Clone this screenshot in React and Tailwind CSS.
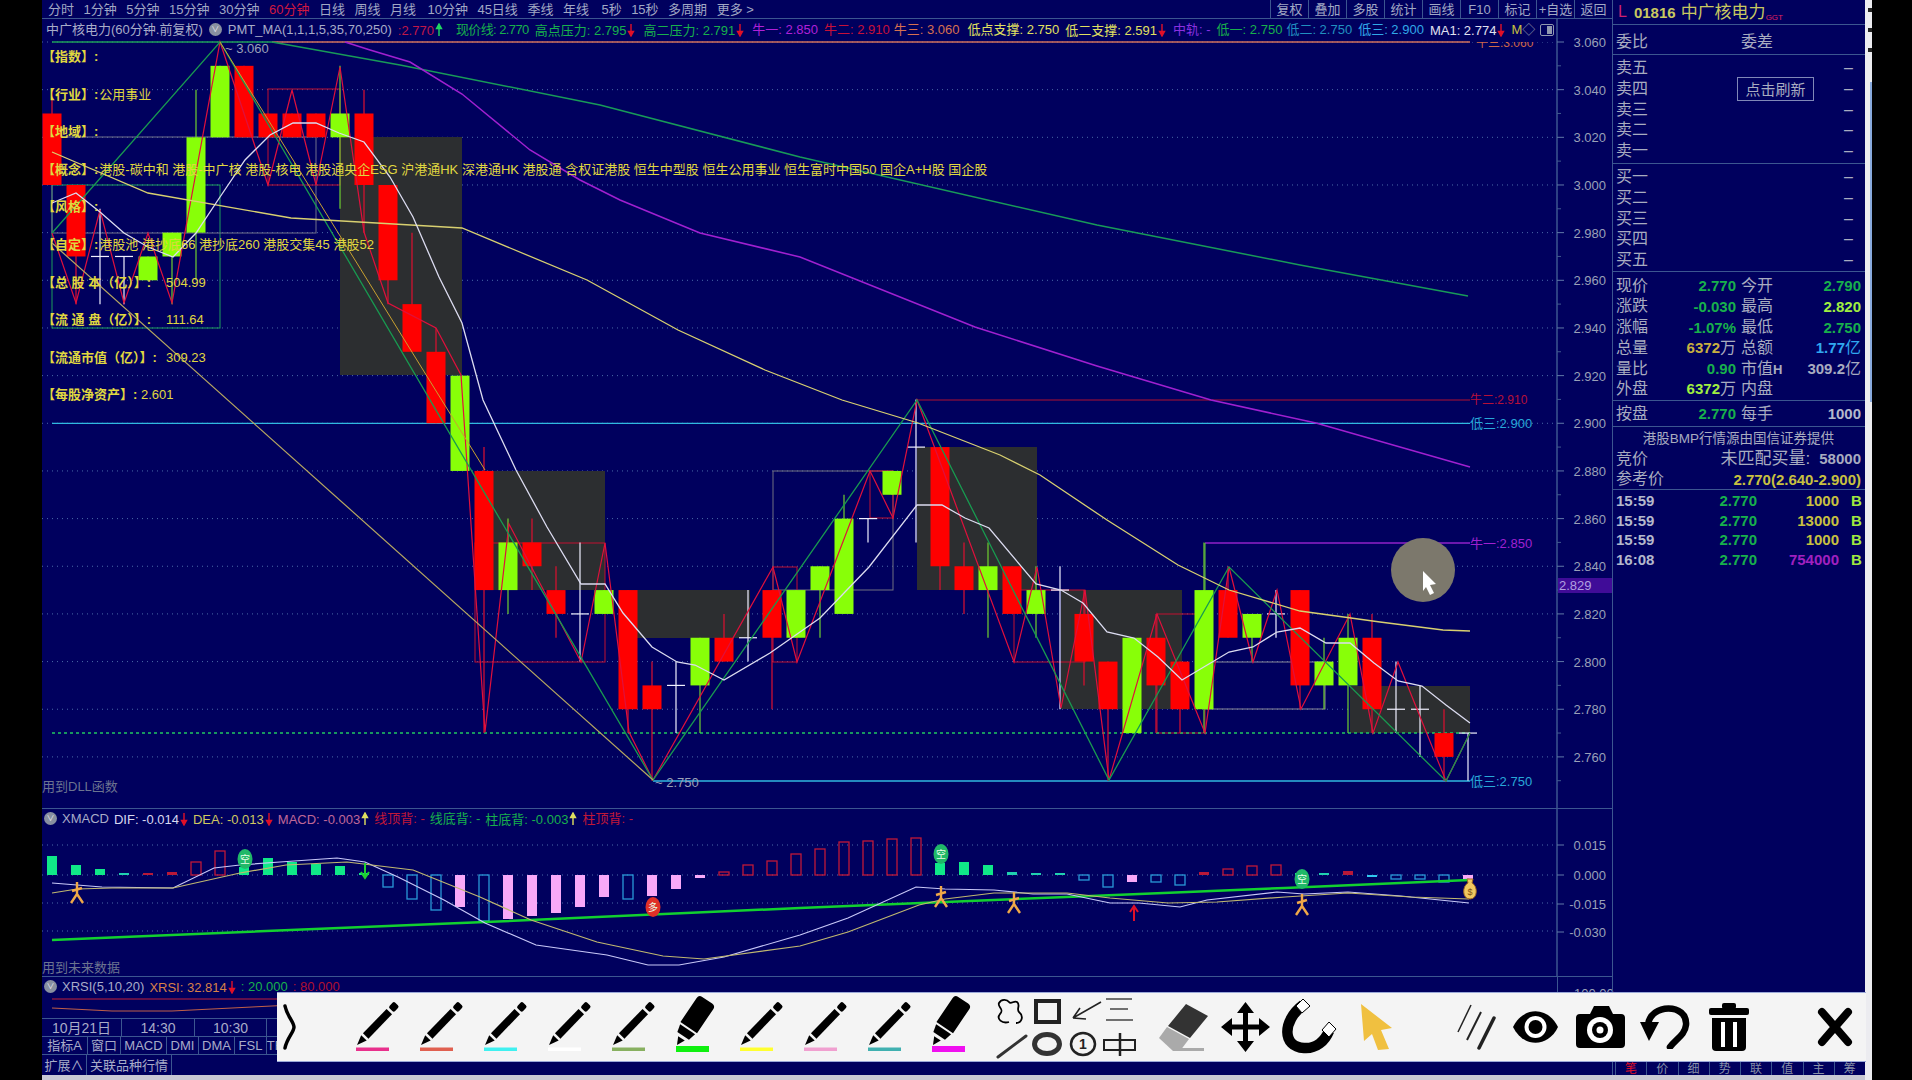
import { Fragment } from "react";

const py = (p) => 42 + (3.06 - p) * 2383;
const cx = (i) => 52 + 24 * i;

// type, top, bottom, high, low
const candles = [
  ["r", 3.03, 3.0, 3.04, 3.0], ["r", 3.0, 2.97, 3.0, 2.95], ["d", 2.97, 2.97, 2.99, 2.95], ["d", 2.97, 2.97, 2.97, 2.95],
  ["g", 2.97, 2.96, 2.97, 2.96], ["g", 2.98, 2.97, 2.98, 2.95], ["g", 3.02, 2.98, 3.04, 2.96], ["g", 3.05, 3.02, 3.05, 3.02],
  ["r", 3.05, 3.02, 3.05, 3.02], ["r", 3.03, 3.02, 3.03, 3.02], ["r", 3.03, 3.02, 3.03, 3.02], ["r", 3.03, 3.02, 3.03, 3.02],
  ["g", 3.03, 3.02, 3.05, 2.99], ["r", 3.03, 3.0, 3.04, 2.98], ["r", 3.0, 2.96, 3.0, 2.95], ["r", 2.95, 2.93, 2.98, 2.93],
  ["r", 2.93, 2.9, 2.94, 2.9], ["g", 2.92, 2.88, 2.92, 2.88], ["r", 2.88, 2.83, 2.89, 2.77], ["g", 2.85, 2.83, 2.86, 2.82],
  ["r", 2.85, 2.84, 2.86, 2.83], ["r", 2.83, 2.82, 2.84, 2.81], ["d", 2.82, 2.82, 2.85, 2.8], ["g", 2.83, 2.82, 2.83, 2.82],
  ["r", 2.83, 2.78, 2.83, 2.77], ["r", 2.79, 2.78, 2.8, 2.75], ["d", 2.79, 2.79, 2.8, 2.77], ["g", 2.81, 2.79, 2.81, 2.77],
  ["r", 2.81, 2.8, 2.82, 2.8], ["d", 2.81, 2.81, 2.83, 2.8], ["r", 2.83, 2.81, 2.83, 2.78], ["g", 2.83, 2.81, 2.83, 2.81],
  ["g", 2.84, 2.83, 2.84, 2.81], ["g", 2.86, 2.82, 2.87, 2.82], ["d", 2.86, 2.86, 2.86, 2.85], ["g", 2.88, 2.87, 2.88, 2.87],
  ["d", 2.89, 2.89, 2.91, 2.85], ["r", 2.89, 2.84, 2.89, 2.83], ["r", 2.84, 2.83, 2.85, 2.82], ["g", 2.84, 2.83, 2.85, 2.81],
  ["r", 2.84, 2.82, 2.84, 2.82], ["g", 2.83, 2.82, 2.84, 2.81], ["d", 2.83, 2.83, 2.84, 2.78], ["r", 2.82, 2.8, 2.83, 2.79],
  ["r", 2.8, 2.78, 2.8, 2.75], ["g", 2.81, 2.77, 2.81, 2.77], ["r", 2.81, 2.79, 2.82, 2.77], ["r", 2.8, 2.78, 2.8, 2.77],
  ["g", 2.83, 2.78, 2.85, 2.77], ["r", 2.83, 2.81, 2.84, 2.81], ["g", 2.82, 2.81, 2.82, 2.8], ["d", 2.82, 2.82, 2.83, 2.81],
  ["r", 2.83, 2.79, 2.83, 2.78], ["g", 2.8, 2.79, 2.81, 2.78], ["g", 2.81, 2.79, 2.82, 2.77], ["r", 2.81, 2.78, 2.82, 2.77],
  ["d", 2.78, 2.78, 2.8, 2.77], ["d", 2.78, 2.78, 2.79, 2.76], ["r", 2.77, 2.76, 2.78, 2.75], ["d", 2.77, 2.77, 2.77, 2.75],
];

const pts = (arr) => arr.map((p) => p.join(",")).join(" ");

const redZig = [[52, 233], [76, 303], [100, 210], [124, 303], [148, 233], [172, 303], [220, 42], [268, 185], [292, 90], [316, 185], [340, 67], [364, 232], [388, 303], [436, 328], [461, 375], [485, 732], [509, 524], [581, 662], [605, 543], [629, 732], [653, 780], [773, 567], [797, 662], [870, 471], [893, 518], [917, 400], [1014, 662], [1037, 567], [1061, 708], [1085, 590], [1109, 780], [1157, 614], [1205, 733], [1229, 567], [1253, 662], [1277, 590], [1301, 709], [1350, 614], [1373, 733], [1398, 662], [1446, 781], [1470, 733]];
const greenZig = [[52, 233], [220, 42], [653, 780], [917, 400], [1109, 780], [1229, 567], [1446, 781], [1470, 733]];
const whiteMa = [[52, 203], [76, 193], [100, 212], [124, 233], [148, 247], [173, 257], [196, 233], [220, 197], [245, 160], [270, 135], [293, 123], [316, 123], [339, 133], [364, 142], [390, 177], [413, 217], [439, 277], [462, 323], [483, 400], [516, 470], [547, 527], [581, 584], [605, 584], [623, 613], [652, 647], [677, 662], [695, 665], [724, 680], [770, 653], [820, 618], [869, 567], [917, 505], [942, 505], [965, 518], [989, 528], [1036, 584], [1061, 590], [1083, 603], [1107, 632], [1134, 638], [1158, 657], [1182, 680], [1229, 652], [1253, 647], [1277, 632], [1300, 628], [1326, 643], [1350, 643], [1374, 663], [1398, 681], [1422, 686], [1446, 705], [1470, 723]];
const yellowMa = [[52, 152], [148, 193], [291, 218], [462, 228], [587, 280], [678, 330], [765, 370], [842, 400], [918, 423], [1000, 455], [1040, 475], [1107, 520], [1178, 565], [1229, 590], [1300, 611], [1380, 622], [1443, 630], [1470, 631]];
const greenMa = [[272, 42], [400, 65], [600, 105], [800, 157], [1097, 225], [1300, 265], [1468, 296]];
const purpleMa = [[345, 42], [370, 50], [410, 62], [462, 94], [530, 150], [580, 180], [620, 200], [700, 233], [800, 257], [975, 327], [1097, 366], [1211, 400], [1316, 423], [1470, 467]];

const boxes = [
  [52, 185, 168, 143, "#1c9e5a"], [52, 137, 264, 96, "#70708a"], [268, 89, 72, 96, "#c01030"], [52, 233, 120, 0, "#c01030"],
  [475, 543, 130, 119, "#c01030"], [485, 602, 120, 0, "#c01030"], [773, 471, 120, 119, "#707080"], [773, 567, 24, 95, "#c01030"],
  [870, 471, 23, 47, "#c01030"], [1014, 590, 71, 72, "#c01030"], [1014, 627, 71, 0, "#c01030"], [1157, 614, 48, 119, "#c01030"],
  [1205, 662, 120, 47, "#8a8a98"], [1253, 662, 147, 0, "#c01030"], [1061, 590, 24, 0, "#c01030"],
];
const darkRects = [[340, 137, 122, 238], [485, 471, 120, 119], [620, 590, 130, 48], [917, 447, 120, 143], [1061, 590, 121, 119], [1350, 686, 120, 47]];

const macdBars = [
  ["s", 856], ["s", 865], ["s", 869], ["t", 873], ["m", 873], ["m", 872], ["o", 862], ["o", 851], ["s", 867], ["s", 858], ["s", 862], ["s", 864], ["s", 866], ["s", 873],
  ["b", 887], ["b", 899], ["b", 910], ["p", 907], ["b", 921], ["p", 919], ["p", 916], ["p", 913], ["p", 907], ["p", 897], ["b", 899], ["p", 896], ["p", 889], ["p", 878],
  ["o", 872], ["o", 865], ["o", 861], ["o", 854], ["o", 849], ["o", 842], ["o", 841], ["o", 839], ["o", 838], ["s", 863], ["s", 862], ["s", 865], ["t", 872], ["t", 873], ["t", 873],
  ["b", 880], ["b", 887], ["p", 882], ["b", 882], ["b", 885], ["m", 872], ["o", 869], ["o", 866], ["o", 865], ["s", 873], ["t", 873], ["m", 871], ["c", 875], ["b", 879], ["b", 879], ["b", 882], ["p", 880],
];

const dif = [[52, 883], [102, 887], [173, 888], [214, 868], [240, 865], [280, 862], [337, 858], [365, 862], [398, 877], [444, 900], [485, 923], [536, 945], [607, 955], [648, 965], [679, 965], [724, 957], [800, 935], [848, 918], [916, 887], [945, 889], [994, 890], [1033, 894], [1067, 894], [1110, 903], [1139, 903], [1180, 907], [1207, 900], [1277, 892], [1304, 894], [1348, 892], [1401, 896], [1469, 903]];
const dea = [[52, 893], [77, 889], [112, 888], [173, 888], [240, 873], [286, 865], [347, 862], [413, 870], [480, 897], [531, 920], [597, 942], [663, 956], [704, 959], [800, 946], [848, 932], [919, 905], [945, 899], [994, 893], [1067, 893], [1110, 898], [1168, 903], [1217, 902], [1285, 897], [1348, 893], [1411, 897], [1469, 899]];
const thick = [[52, 940], [485, 922], [800, 908], [921, 903], [1091, 896], [1285, 888], [1469, 880]];

const axisPrices = [3.06, 3.04, 3.02, 3.0, 2.98, 2.96, 2.94, 2.92, 2.9, 2.88, 2.86, 2.84, 2.82, 2.8, 2.78, 2.76];

function Arrow({ down, color }) {
  return (
    <svg width="8" height="14" viewBox="0 0 8 14" className="ml-px inline-block align-[-2px]">
      {down ? (
        <path d="M4 1 V10 M1.5 8.5 L4 13 L6.5 8.5 Z" stroke={color} strokeWidth="1.4" fill={color} />
      ) : (
        <path d="M4 13 V4 M1.5 5.5 L4 1 L6.5 5.5 Z" stroke={color} strokeWidth="1.4" fill={color} />
      )}
    </svg>
  );
}

function Runner({ x, y }) {
  return (
    <g transform={`translate(${x},${y})`} stroke="#f0a848" strokeWidth="2.4" fill="none">
      <path d="M0 -11 L0 1 M0 1 L-6 10 M0 1 L6 10 M-5 -2 L5 -5" />
    </g>
  );
}

function Badge({ x, y, fill, text }) {
  return (
    <g>
      <ellipse cx={x} cy={y} rx="7.5" ry="10" fill={fill} />
      <text x={x} y={y + 4} textAnchor="middle" fontSize="10" fill="#e8ffe8">{text}</text>
    </g>
  );
}

function MainChart() {
  return (
    <svg width="1570" height="790" viewBox="42 19 1570 790" className="block">
      {axisPrices.map((p) => (
        <line key={p} x1="42" x2="1557" y1={py(p)} y2={py(p)} stroke="#4a6aa8" strokeWidth="1" strokeDasharray="1 4" />
      ))}
      {darkRects.map((r, i) => <rect key={i} x={r[0]} y={r[1]} width={r[2]} height={r[3]} fill="#2c2e30" />)}
      {boxes.map((b, i) => <rect key={i} x={b[0]} y={b[1]} width={b[2]} height={b[3]} fill="none" stroke={b[4]} strokeWidth="1" />)}
      <text x="1476" y="47" fontSize="12" fill="#d06848">牛三:3.060</text>
      <rect x="1470" y="19" width="86" height="23" fill="#00005e" />
      <line x1="52" x2="272" y1="42" y2="42" stroke="#1c9e5a" strokeWidth="1.5" />
      <line x1="272" x2="1470" y1="42" y2="42" stroke="#d0705c" strokeWidth="1.5" />
      <line x1="917" x2="1470" y1="400" y2="400" stroke="#b01030" strokeWidth="1" />
      <line x1="52" x2="1470" y1={py(2.9)} y2={py(2.9)} stroke="#30b8e0" strokeWidth="1.3" />
      <line x1="653" x2="1470" y1="781" y2="781" stroke="#30b8e0" strokeWidth="1.3" />
      <line x1="1205" x2="1470" y1="543" y2="543" stroke="#9020c8" strokeWidth="1.5" />
      <line x1="1205" x2="1205" y1="543" y2="590" stroke="#60d040" strokeWidth="1" />
      <line x1="52" x2="1470" y1="733" y2="733" stroke="#20c860" strokeWidth="1.5" strokeDasharray="3 3" />
      {candles.map((c, i) => {
        const x = cx(i);
        const color = c[0] === "r" ? "#ff0000" : c[0] === "g" ? "#88ff08" : "#f0f0ff";
        const wick = c[0] === "r" ? "#e01030" : c[0] === "g" ? "#70d030" : "#f0f0ff";
        return (
          <Fragment key={i}>
            <line x1={x} x2={x} y1={py(c[3])} y2={py(c[4])} stroke={wick} strokeWidth="1.2" />
            {c[0] === "d" ? (
              <line x1={x - 9} x2={x + 9} y1={py(c[1])} y2={py(c[1])} stroke={color} strokeWidth="1.2" />
            ) : (
              <rect x={x - 9.5} y={py(c[1])} width="19" height={py(c[2]) - py(c[1])} fill={color} />
            )}
          </Fragment>
        );
      })}
      <polyline points={pts(redZig)} fill="none" stroke="#e0103c" strokeWidth="1.2" />
      <polyline points={pts(greenZig)} fill="none" stroke="#189a50" strokeWidth="1.3" />
      <line x1="52" y1="243" x2="653" y2="780" stroke="#b8a860" strokeWidth="1.2" />
      <line x1="220" y1="42" x2="485" y2="470" stroke="#c8a030" strokeWidth="1" />
      <polyline points={pts(greenMa)} fill="none" stroke="#189a58" strokeWidth="1.5" />
      <polyline points={pts(purpleMa)} fill="none" stroke="#a020d0" strokeWidth="1.5" />
      <polyline points={pts(yellowMa)} fill="none" stroke="#d8d070" strokeWidth="1.3" />
      <polyline points={pts(whiteMa)} fill="none" stroke="#dcdcf0" strokeWidth="1.3" />

      <ellipse cx="1423" cy="570" rx="32" ry="32" fill="#7c786c" />
      <polygon points="1423,571 1436,584 1430,585 1434,593 1430,595 1426,587 1423,591" fill="#fff" />

      <line x1="1557" x2="1557" y1="19" y2="809" stroke="#3c5690" strokeWidth="1.5" />
      {axisPrices.map((p) => (
        <Fragment key={p}>
          <line x1="1557" x2="1564" y1={py(p)} y2={py(p)} stroke="#6078a8" />
          <line x1="1557" x2="1561" y1={py(p) + 23.8} y2={py(p) + 23.8} stroke="#40598f" />
          <text x="1606" y={py(p) + 5} textAnchor="end" fontSize="13" fill="#9aa0b8">{p.toFixed(3)}</text>
        </Fragment>
      ))}
      <rect x="1558" y="578" width="54" height="15" fill="#400c98" />
      <text x="1559" y="590" fontSize="13" fill="#b0a0e0">2.829</text>

      <text x="1470" y="404" fontSize="12" fill="#b81038">牛二:2.910</text>
      <text x="1470" y="428" fontSize="13" fill="#28a8d8">低三:2.900</text>
      <text x="1470" y="548" fontSize="13" fill="#a020d0">牛一:2.850</text>
      <text x="1470" y="786" fontSize="13" fill="#28a8d8">低三:2.750</text>
      <text x="225" y="53" fontSize="13" fill="#9aa0b8">~ 3.060</text>
      <text x="655" y="787" fontSize="13" fill="#9aa0b8">~ 2.750</text>
    </svg>
  );
}

function MacdChart() {
  return (
    <svg width="1570" height="168" viewBox="42 809 1570 168" className="block">
      {[845, 875, 903, 931].map((y) => (
        <line key={y} x1="42" x2="1557" y1={y} y2={y} stroke="#4a6aa8" strokeDasharray="1 4" />
      ))}
      {macdBars.map((b, i) => {
        const x = cx(i) - 5;
        const top = Math.min(b[1], 875);
        const h = Math.max(Math.abs(b[1] - 875), 2);
        const fill = { s: "#10e888", t: "#20d0b0", m: "#b81838", p: "#f8a8f8", c: "#30c8f0" }[b[0]] || "none";
        const stroke = { o: "#c01838", b: "#2898d8" }[b[0]] || "none";
        return <rect key={i} x={x} y={top} width="10" height={h} fill={fill} stroke={stroke} strokeWidth="1.3" />;
      })}
      <polyline points={pts(thick)} fill="none" stroke="#12d030" strokeWidth="2.5" />
      <polyline points={pts(dif)} fill="none" stroke="#c8c8f8" strokeWidth="1.2" />
      <polyline points={pts(dea)} fill="none" stroke="#c0b870" strokeWidth="1.2" />
      <Runner x={77} y={893} />
      <Runner x={941} y={897} />
      <Runner x={1014} y={903} />
      <Runner x={1302} y={905} />
      <Badge x={245} y={859} fill="#20b868" text="空" />
      <Badge x={941} y={854} fill="#20b868" text="空" />
      <Badge x={1302} y={879} fill="#20b868" text="空" />
      <Badge x={653} y={907} fill="#e03028" text="多" />
      <path d="M365 863 V876 M361 872 L365 878 L369 872" stroke="#20d030" strokeWidth="2" fill="none" />
      <path d="M1134 921 V908 M1130 912 L1134 906 L1138 912" stroke="#e01028" strokeWidth="2" fill="none" />
      <g>
        <path d="M1467 879 h6 l-1 4 c6 3 6 16 -2 16 c-8 0 -8 -13 -2 -16 z" fill="#f0c860" stroke="#a06820" />
        <text x="1470" y="895" textAnchor="middle" fontSize="9" fill="#805010">$</text>
      </g>
      <line x1="1557" x2="1557" y1="809" y2="977" stroke="#3c5690" strokeWidth="1.5" />
      {[[845, "0.015"], [875, "0.000"], [904, "-0.015"], [932, "-0.030"]].map((t) => (
        <Fragment key={t[1]}>
          <line x1="1557" x2="1564" y1={t[0]} y2={t[0]} stroke="#6078a8" />
          <text x="1606" y={t[0] + 5} textAnchor="end" fontSize="13" fill="#9aa0b8">{t[1]}</text>
        </Fragment>
      ))}
    </svg>
  );
}

function Collapse() {
  return (
    <span className="flex h-[13px] w-[13px] shrink-0 items-center justify-center rounded-full bg-[#8890a0] text-[8px] leading-none text-[#e8e8f0]">∨</span>
  );
}

function Pen({ color, marker }) {
  return (
    <svg width="64" height="50" viewBox="0 0 64 50" className="block shrink-0 overflow-visible">
      {marker ? (
        <g transform="translate(1,43) rotate(-56)" fill="#000">
          <polygon points="0,0 8,-4 8,4" />
          <polygon points="11,-7 19,-9 19,9 11,7" />
          <path d="M21 -10 H50 Q54 -10 54 -6 V6 Q54 10 50 10 H21 Z" />
        </g>
      ) : (
        <g transform="translate(1,43) rotate(-46)" fill="#000">
          <polygon points="0,0 10,-3.8 10,3.8" />
          <rect x="12.5" y="-3.8" width="34" height="7.6" />
          <rect x="49" y="-3.8" width="8" height="7.6" rx="2" />
        </g>
      )}
      <rect x="0" y={marker ? 44 : 45.5} width="33" height={marker ? 6 : 3.5} fill={color} />
    </svg>
  );
}

function Toolbar() {
  return (
    <div className="absolute left-[277px] top-[992px] flex h-[70px] w-[1589px] items-center border-y border-[#9aa8d8] bg-[#f4f4f4]">
      <svg width="13" height="46" viewBox="0 0 13 46" className="ml-[6px] shrink-0">
        <path d="M2 2 C4 12 11 18 11 23 C11 28 4 34 2 44" stroke="#000" strokeWidth="3.5" fill="none" strokeLinecap="round" />
      </svg>
      <div className="ml-[60px] flex shrink-0">
        <Pen color="#e8308c" />
        <Pen color="#e06050" />
        <Pen color="#40f0f0" />
        <Pen color="#ffffff" />
        <Pen color="#88b060" />
        <Pen color="#10f010" marker />
        <Pen color="#ffff30" />
        <Pen color="#f0a0d0" />
        <Pen color="#40b0b0" />
        <Pen color="#f010f0" marker />
      </div>
      <svg width="142" height="65" viewBox="995 995 142 65" className="ml-[-1px] shrink-0">
        <path d="M1009 1022 C1002 1024 996 1019 1000 1014 C1005 1009 997 1007 999 1003 C1001 999 1007 999 1009 1002 C1011 1005 1014 1000 1017 1002 C1021 1005 1016 1009 1019 1012 C1024 1016 1022 1023 1016 1023" fill="none" stroke="#000" strokeWidth="1.8" />
        <rect x="1036" y="1001" width="23" height="21" fill="none" stroke="#222" strokeWidth="4" />
        <path d="M1101 1002 L1073 1018 M1073 1018 L1080 1008 M1073 1018 L1086 1019" stroke="#222" strokeWidth="1.6" fill="none" />
        <path d="M1106 999 H1132 M1110 1009 H1128 M1106 1020 H1133" stroke="#444" strokeWidth="1.6" />
        <line x1="998" y1="1057" x2="1026" y2="1036" stroke="#333" strokeWidth="3" strokeLinecap="round" />
        <ellipse cx="1047" cy="1044" rx="12.5" ry="9.5" fill="none" stroke="#333" strokeWidth="5" />
        <ellipse cx="1083" cy="1044" rx="12" ry="11" fill="none" stroke="#222" strokeWidth="2.5" />
        <text x="1083" y="1049" textAnchor="middle" fontSize="14" fontWeight="700" fill="#222">1</text>
        <rect x="1104" y="1040" width="31" height="10" fill="none" stroke="#222" strokeWidth="2" />
        <line x1="1120" y1="1033" x2="1120" y2="1056" stroke="#222" strokeWidth="2.5" />
      </svg>
      <svg width="50" height="50" viewBox="0 0 50 50" className="ml-[21px] shrink-0">
        <polygon points="28,2 50,14 32,36 10,24" fill="#333" />
        <polygon points="9,25 31,37 22,49 15,49 1,36" fill="#aaa" />
        <rect x="22" y="46" width="24" height="3" fill="#aaa" />
      </svg>
      <svg width="49" height="50" viewBox="0 0 49 50" className="ml-[13px] shrink-0">
        <path d="M24.5 6 V44 M6 25 H43" stroke="#000" strokeWidth="5" />
        <path d="M24.5 0 L33 11 H16 Z M24.5 50 L33 39 H16 Z M0 25 L11 16 V34 Z M49 25 L38 16 V34 Z" fill="#000" />
      </svg>
      <svg width="56" height="56" viewBox="0 0 56 56" className="ml-[12px] shrink-0">
        <path d="M21 6 C0 22 0 48 22 49 C34 50 43 42 47 32" stroke="#000" strokeWidth="10.5" fill="none" />
        <polygon points="21,0 28,7 20,14 14,7" fill="#fff" stroke="#000" />
        <polygon points="47,23 54,30 47,38 40,31" fill="#fff" stroke="#000" />
      </svg>
      <svg width="32" height="46" viewBox="0 0 32 46" className="ml-[23px] shrink-0">
        <polygon points="0,0 31,24 20,26 28,45 17,46 11,30 3,37" fill="#f0c040" />
      </svg>
      <svg width="40" height="46" viewBox="0 0 40 46" className="ml-[64px] shrink-0">
        <path d="M14 1 L1 28" stroke="#222" strokeWidth="1.5" />
        <path d="M24 8 L10 36" stroke="#222" strokeWidth="2" />
        <path d="M37 14 L22 44" stroke="#222" strokeWidth="3.5" strokeLinecap="round" />
      </svg>
      <svg width="45" height="34" viewBox="0 0 45 34" className="ml-[16px] shrink-0">
        <path d="M0 17 C10 -4 35 -4 45 17 C35 38 10 38 0 17 Z" fill="#000" />
        <ellipse cx="22.5" cy="17" rx="11" ry="11" fill="#fff" />
        <ellipse cx="22.5" cy="17" rx="7" ry="7" fill="#000" />
      </svg>
      <svg width="49" height="42" viewBox="0 0 49 42" className="ml-[18px] shrink-0">
        <path d="M4 8 H14 L18 0 H33 L37 8 H45 Q49 8 49 12 V38 Q49 42 45 42 H4 Q0 42 0 38 V12 Q0 8 4 8 Z" fill="#000" />
        <ellipse cx="24" cy="24" rx="13" ry="13" fill="#fff" />
        <ellipse cx="24" cy="24" rx="8" ry="8" fill="#000" />
        <ellipse cx="24" cy="24" rx="3.5" ry="3.5" fill="#fff" />
      </svg>
      <svg width="50" height="44" viewBox="0 0 50 44" className="ml-[15px] shrink-0">
        <path d="M8 20 C10 -2 48 -2 46 20 C45 30 36 34 30 42" stroke="#000" strokeWidth="6.5" fill="none" strokeLinecap="round" />
        <polygon points="0,17 19,17 9,36" fill="#000" />
      </svg>
      <svg width="40" height="48" viewBox="0 0 40 48" className="ml-[19px] shrink-0">
        <rect x="13" y="0" width="14" height="6" rx="2" fill="#000" />
        <rect x="0" y="5" width="40" height="7" rx="2" fill="#000" />
        <path d="M3 15 H37 V44 Q37 48 33 48 H7 Q3 48 3 44 Z" fill="#000" />
        <rect x="12" y="19" width="4" height="25" fill="#fff" />
        <rect x="24" y="19" width="4" height="25" fill="#fff" />
      </svg>
      <svg width="36" height="40" viewBox="0 0 36 40" className="ml-[68px] shrink-0">
        <path d="M5 5 L31 35 M31 5 L5 35" stroke="#000" strokeWidth="8" strokeLinecap="round" />
      </svg>
    </div>
  );
}

function tabClass(t) {
  if (t === "60分钟") return "text-[#d01840]";
  if (t === "10分钟") return "ml-[2px]";
  if (t === "5秒") return "ml-[3px]";
  return "";
}

function TopTabs() {
  const tabs = ["分时", "1分钟", "5分钟", "15分钟", "30分钟", "60分钟", "日线", "周线", "月线", "10分钟", "45日线", "季线", "年线", "5秒", "15秒", "多周期", "更多 >"];
  const btns = ["复权", "叠加", "多股", "统计", "画线", "F10", "标记", "+自选"];
  return (
    <div className="flex h-[19px] items-center border-b border-[#3c5690] pl-[6px] text-[13px] leading-none text-[#a0a8c4]">
      <div className="flex gap-[9.5px]">
        {tabs.map((t) => (
          <span key={t} className={tabClass(t)}>{t}</span>
        ))}
      </div>
      <div className="ml-auto flex h-full">
        {btns.map((t) => (
          <span key={t} className="flex w-[38px] items-center justify-center border-l border-[#3c5690]">{t}</span>
        ))}
        <span className="flex w-[38px] items-center justify-center border-l border-[#3c5690]">返回</span>
      </div>
    </div>
  );
}

function Legend() {
  const red = "#e01028";
  return (
    <div className="absolute left-[4px] top-[3px] flex h-[15px] w-[1555px] items-center gap-[6px] whitespace-nowrap text-[13px] leading-none">
      <span className="text-[#a8acc8]">中广核电力(60分钟.前复权)</span>
      <Collapse />
      <span className="text-[#a8acc8]">PMT_MA(1,1,1,5,35,70,250)</span>
      <span className="text-[#c01848]">:2.770<Arrow color="#20d860" /></span>
      <span className="ml-[7px] tracking-[-0.6px] text-[#18b04c]">现价线: 2.770</span>
      <span className="text-[#18b04c]">高点压力: 2.795<Arrow down color={red} /></span>
      <span className="ml-[2px] text-[#18b04c]">高二压力: 2.791<Arrow down color={red} /></span>
      <span className="ml-[2px] text-[#b020d8]">牛一: 2.850</span>
      <span className="text-[#c81038]">牛二: 2.910</span>
      <span className="ml-[-2px] text-[#d87050]">牛三: 3.060</span>
      <span className="ml-[2px] text-[#e0e060]">低点支撑: 2.750</span>
      <span className="text-[#e0e060]">低二支撑: 2.591<Arrow down color={red} /></span>
      <span className="ml-[1px] text-[#8a30e0]">中轨: -</span>
      <span className="text-[#18b04c]">低一: 2.750</span>
      <span className="ml-[-2px] text-[#2090c0]">低二: 2.750</span>
      <span className="text-[#30a8e8]">低三: 2.900</span>
      <span className="text-[#e0e0f0]">MA1: 2.774<Arrow down color={red} /></span>
      <span className="text-[#c8c040]">M<span className="text-[#8890a8]">◇</span></span>
      <span className="ml-[-1px] flex h-[12px] w-[14px] justify-end rounded-[2px] border border-[#9098b0] p-px"><span className="w-[5px] bg-[#9098b0]" /></span>
    </div>
  );
}

function StockInfo() {
  const rows = [
    ["【指数】:", "", ""],
    ["【行业】:", "公用事业", ""],
    ["【地域】:", "", ""],
    ["【概念】:", "港股-碳中和 港股-中广核 港股-核电 港股通央企ESG 沪港通HK 深港通HK 港股通 含权证港股 恒生中型股 恒生公用事业 恒生富时中国50 国企A+H股 国企股", ""],
    ["【风格】:", "", ""],
    ["【自定】:", "港股池 港抄底66 港抄底260 港股交集45 港股52", ""],
    ["【总 股 本（亿）】:", "504.99", "w-[124px]"],
    ["【流 通 盘（亿）】:", "111.64", "w-[124px]"],
    ["【流通市值（亿）】:", "309.23", "w-[124px]"],
    ["【每股净资产】:", "2.601", "w-[99px]"],
  ];
  return (
    <div className="absolute left-0 top-[19px] flex flex-col whitespace-nowrap text-[13px] text-[#e0d840]">
      {rows.map((r) => (
        <div key={r[0]} className="flex h-[37.6px] items-center">
          <span className={`font-bold ${r[2]}`}>{r[0]}</span>
          <span className={r[1] && r[0].length < 7 ? "ml-[1px]" : ""}>{r[1]}</span>
        </div>
      ))}
    </div>
  );
}

function BookRow({ label }) {
  return (
    <div className="flex h-[20.7px] items-center justify-between pr-[12px]">
      <span>{label}</span>
      <span className="text-[#a8acc0]">–</span>
    </div>
  );
}

function StatRow({ a, av, b, bv }) {
  return (
    <div className="grid h-[20.7px] grid-cols-[120px_120px] items-center gap-x-[5px]">
      <div className="flex items-center justify-between"><span>{a}</span>{av}</div>
      <div className="flex items-center justify-between"><span>{b}</span>{bv}</div>
    </div>
  );
}

const num = (t, c) => <span className={`text-[15px] font-bold leading-none ${c}`}>{t}</span>;

function TickRow({ time, vol, volClass }) {
  return (
    <div className="flex h-[19.5px] items-center text-[15px] font-bold leading-none">
      <span className="w-[96px] text-[#b4b8cc]">{time}</span>
      <span className="w-[45px] text-right text-[#18b04c]">2.770</span>
      <span className={`w-[82px] text-right ${volClass}`}>{vol}</span>
      <span className="ml-[12px] text-[#a0e840]">B</span>
    </div>
  );
}

function RightPanel() {
  const green = "text-[#18b04c]";
  return (
    <div className="relative flex h-full w-[253px] shrink-0 flex-col border-l border-[#3c5690] text-[16px] leading-none text-[#a8acc0]">
      <div className="flex h-[25px] items-center border-b border-[#3c5690] pl-[5px]">
        <span className="text-[16px] text-[#d02070]">L</span>
        <span className="ml-[7px] text-[15px] font-bold text-[#c8c860]">01816</span>
        <span className="ml-[5px] text-[17px] text-[#c8c860]">中广核电力</span>
        <span className="mt-[11px] text-[8px] text-[#e02060]">GGT</span>
      </div>
      <div className="flex h-[30px] items-center border-b border-[#3c5690] pl-[3px] pt-[4px]">
        <span className="w-[125px]">委比</span>
        <span>委差</span>
      </div>
      <div className="flex h-[109px] flex-col justify-center border-b border-[#3c5690] pl-[3px] pt-[1px]">
        {["卖五", "卖四", "卖三", "卖二", "卖一"].map((t) => <BookRow key={t} label={t} />)}
      </div>
      <div className="flex h-[108px] flex-col justify-center border-b border-[#3c5690] pl-[3px] pt-[2px]">
        {["买一", "买二", "买三", "买四", "买五"].map((t) => <BookRow key={t} label={t} />)}
      </div>
      <span className="absolute left-[124px] top-[77px] flex h-[24px] w-[77px] items-center justify-center border border-[#8088b8] text-[15px]">点击刷新</span>
      <div className="flex h-[129px] flex-col justify-center border-b border-[#3c5690] pl-[3px] pt-[3px]">
        <StatRow a="现价" av={num("2.770", green)} b="今开" bv={num("2.790", green)} />
        <StatRow a="涨跌" av={num("-0.030", green)} b="最高" bv={num("2.820", "text-[#a0f040]")} />
        <StatRow a="涨幅" av={num("-1.07%", green)} b="最低" bv={num("2.750", green)} />
        <StatRow a="总量" av={<span>{num("6372", "text-[#c8b040]")}万</span>} b="总额" bv={<span className="text-[#30a8f0]">{num("1.77", "text-[#30a8f0]")}亿</span>} />
        <StatRow a="量比" av={num("0.90", green)} b={<span>市值<b className="text-[13px]">H</b></span>} bv={<span>{num("309.2", "text-[#a8acc0]")}亿</span>} />
        <StatRow a="外盘" av={<span>{num("6372", "text-[#a0f040]")}万</span>} b="内盘" bv={null} />
      </div>
      <div className="flex h-[26px] items-center border-b border-[#3c5690] pl-[3px]">
        <StatRow a="按盘" av={num("2.770", green)} b="每手" bv={num("1000", "text-[#b4b8cc]")} />
      </div>
      <div className="flex h-[63px] flex-col border-b border-[#3c5690] pl-[3px] pr-[4px] pt-[1px]">
        <div className="flex h-[21px] items-center justify-center text-[13.5px]">港股BMP行情源由国信证券提供</div>
        <div className="flex h-[21px] items-center justify-between">
          <span>竞价</span>
          <span className="flex items-center text-[17px]">未匹配买量:<span className="ml-[9px] text-[15px] font-bold">58000</span></span>
        </div>
        <div className="flex h-[20px] items-center justify-between">
          <span>参考价</span>
          <span className="text-[15px] font-bold text-[#c8c040]">2.770(2.640-2.900)</span>
        </div>
      </div>
      <div className="flex flex-col pl-[3px] pt-[1px]">
        <TickRow time="15:59" vol="1000" volClass="text-[#c8c040]" />
        <TickRow time="15:59" vol="13000" volClass="text-[#c8c040]" />
        <TickRow time="15:59" vol="1000" volClass="text-[#c8c040]" />
        <TickRow time="16:08" vol="754000" volClass="text-[#a020c0]" />
      </div>
      <div className="mt-auto flex h-[13px] pl-[2px] text-[12px] text-[#8890a8]">
        {["笔", "价", "细", "势", "联", "值", "主", "筹"].map((t) => (
          <span key={t} className={`flex w-[31.3px] items-center justify-center border-l border-[#3c5690] ${t === "笔" ? "text-[#e01028]" : ""}`}>{t}</span>
        ))}
      </div>
    </div>
  );
}

export default function App() {
  const cell = "flex items-center border-r border-[#3c5690] justify-center";
  const red = "#e01028";
  const yellow = "#e0e060";
  return (
    <div className="relative flex h-[1080px] w-[1912px] overflow-hidden bg-black font-['Liberation_Sans','Noto_Sans_CJK_SC',sans-serif]">
      <div className="ml-[42px] flex w-[1823px] flex-col bg-[#00005e]">
        <div className="flex h-[1075px]">
          <div className="flex w-[1570px] shrink-0 flex-col">
            <TopTabs />
            <div className="relative h-[790px] border-b border-[#3c5690]">
              <MainChart />
              <Legend />
              <StockInfo />
              <span className="absolute left-0 top-[761px] text-[13px] leading-none text-[#6c7490]">用到DLL函数</span>
            </div>
            <div className="relative h-[168px] border-b border-[#3c5690]">
              <MacdChart />
              <div className="absolute left-[2px] top-[2px] flex h-[15px] items-center gap-[5px] whitespace-nowrap text-[13px] leading-none">
                <Collapse />
                <span className="text-[#a8acc8]">XMACD</span>
                <span className="text-[#d8d8f0]">DIF: -0.014<Arrow down color={red} /></span>
                <span className="text-[#d0c860]">DEA: -0.013<Arrow down color={red} /></span>
                <span className="text-[#c06898]">MACD: -0.003<Arrow color={yellow} /></span>
                <span className="text-[#c01838]">线顶背: -</span>
                <span className="text-[#18b04c]">线底背: -</span>
                <span className="text-[#18b04c]">柱底背: -0.003<Arrow color={yellow} /></span>
                <span className="text-[#c01838]">柱顶背: -</span>
              </div>
              <span className="absolute left-0 top-[152px] text-[13px] leading-none text-[#6c7490]">用到未来数据</span>
            </div>
            <div className="relative h-[42px] border-b border-[#3c5690]">
              <div className="absolute left-[2px] top-[2px] flex h-[15px] items-center gap-[5px] whitespace-nowrap text-[13px] leading-none">
                <Collapse />
                <span className="text-[#a8acc8]">XRSI(5,10,20)</span>
                <span className="text-[#d88048]">XRSI: 32.814<Arrow down color={red} /></span>
                <span className="text-[#18b04c]">: 20.000</span>
                <span className="text-[#b01030]">: 80.000</span>
              </div>
              <svg width="240" height="20" viewBox="0 0 240 20" className="absolute left-[10px] top-[20px]">
                <line x1="0" x2="240" y1="2" y2="2" stroke="#c02038" />
                <path d="M0 11 L60 14 L120 14 L180 11 L240 8" fill="none" stroke="#c06048" />
              </svg>
              <span className="absolute left-[1515px] top-0 h-[42px] border-l border-[#3c5690] pl-[16px] pt-[7px] text-[13px] text-[#9aa0b8]">100.00</span>
            </div>
            <div className="flex h-[18px] border-b border-[#3c5690] text-[14px] leading-none text-[#a8acc8]">
              <span className="flex w-[80px] items-center justify-center border-r border-[#3c5690]">10月21日</span>
              <span className="flex w-[73px] items-center justify-center border-r border-[#3c5690]">14:30</span>
              <span className="flex w-[72px] items-center justify-center border-r border-[#3c5690]">10:30</span>
              <span className="flex w-[72px] items-center justify-center">14:30</span>
            </div>
            <div className="flex h-[18px] border-b border-[#3c5690] text-[13px] leading-none text-[#a8acc8]">
              <span className={`${cell} w-[46px]`}>指标A</span>
              <span className={`${cell} w-[33px]`}>窗口</span>
              <span className={`${cell} w-[46px]`}>MACD</span>
              <span className={`${cell} w-[32px]`}>DMI</span>
              <span className={`${cell} w-[36px]`}>DMA</span>
              <span className={`${cell} w-[32px]`}>FSL</span>
              <span className={`${cell} w-[30px]`}>TRIX</span>
            </div>
            <div className="flex h-[20px] text-[13px] leading-none text-[#a8acc8]">
              <span className={`${cell} w-[45px]`}>扩展∧</span>
              <span className={`${cell} w-[85px]`}>关联品种行情</span>
            </div>
          </div>
          <RightPanel />
        </div>
        <div className="h-[5px] bg-[#c8c8d4]" />
      </div>
      <div className="flex w-[7px] flex-col bg-[#ececf0]">
        <div className="ml-auto mt-[8px] h-[4px] w-[4px] bg-[#222]" />
        <div className="ml-auto mt-[16px] h-[4px] w-[4px] bg-[#222]" />
        <div className="ml-auto mt-[16px] h-[4px] w-[4px] bg-[#222]" />
        <div className="ml-auto mt-[30px] h-[320px] w-[2px] bg-[#88aadd]" />
      </div>
      <Toolbar />
    </div>
  );
}
